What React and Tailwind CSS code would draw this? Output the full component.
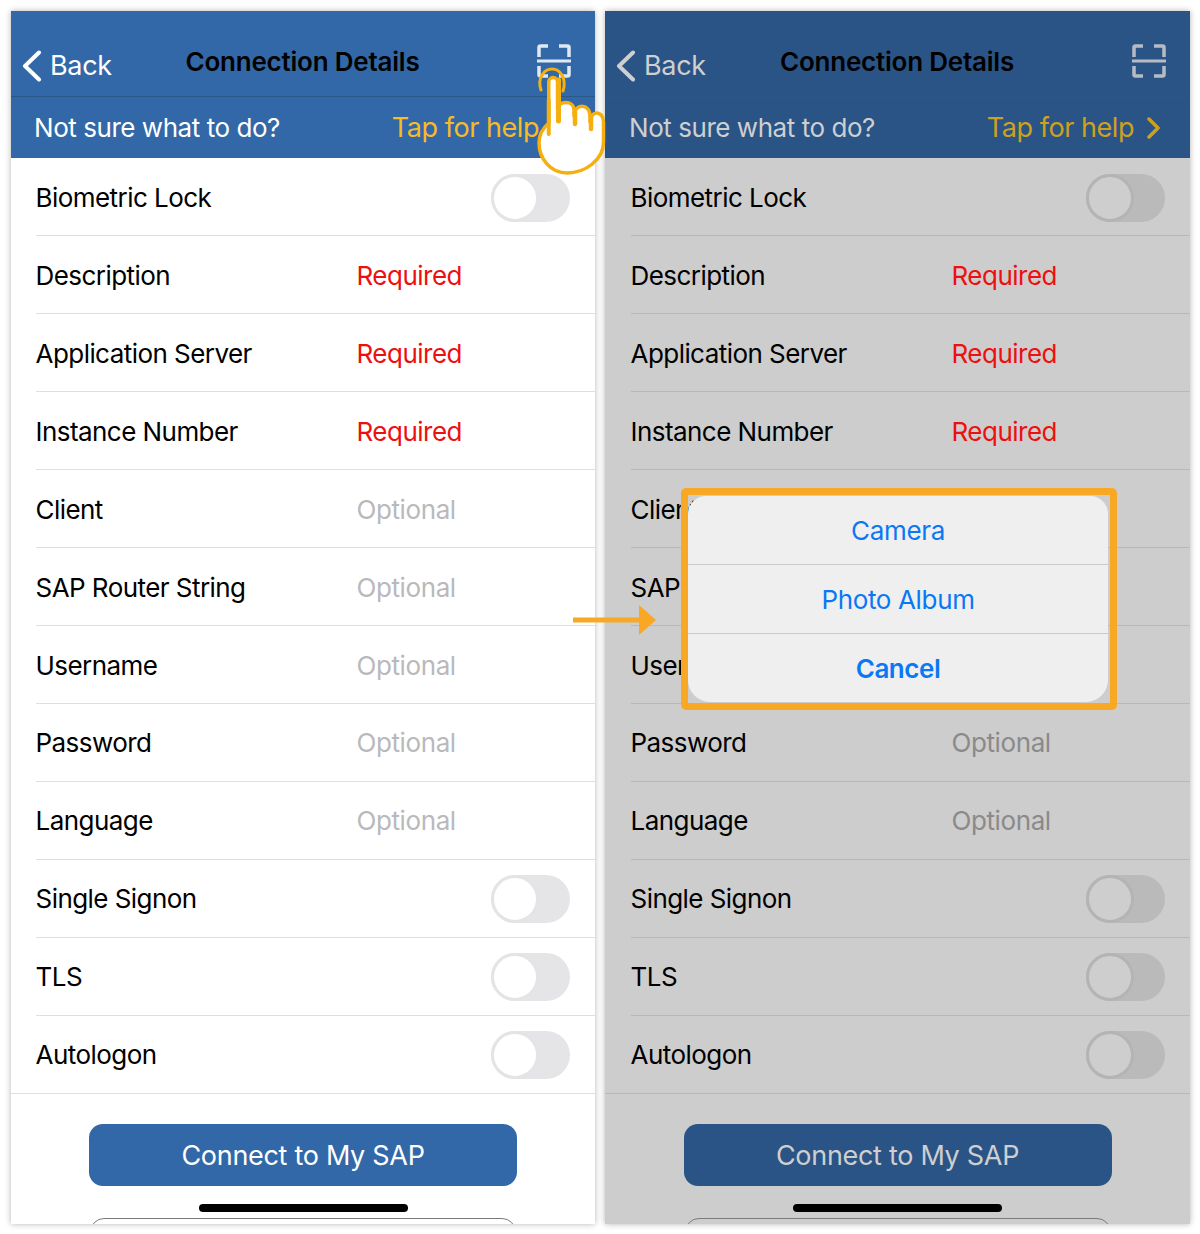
import React from "react";

const rows = [
  ["Biometric Lock", "toggle"],
  ["Description", "Required"],
  ["Application Server", "Required"],
  ["Instance Number", "Required"],
  ["Client", "Optional"],
  ["SAP Router String", "Optional"],
  ["Username", "Optional"],
  ["Password", "Optional"],
  ["Language", "Optional"],
  ["Single Signon", "toggle"],
  ["TLS", "toggle"],
  ["Autologon", "toggle"],
];

function ScanIcon({ color }) {
  return (
    <svg width="34" height="34" viewBox="0 0 34 34" fill="none" stroke={color} strokeWidth="3.5" opacity="0.85">
      <path d="M2 13V3.500A1.500 1.500 0 0 1 3.500 2H11" />
      <path d="M22 2h8.500A1.500 1.500 0 0 1 32 3.500V13" />
      <path d="M2 22v8.500A1.500 1.500 0 0 0 3.500 32H11" />
      <path d="M22 32h8.500a1.500 1.500 0 0 0 1.500-1.500V22" />
      <path d="M0 17h34" strokeWidth="3" />
    </svg>
  );
}

function Toggle({ dim }) {
  return (
    <div className={`flex items-center w-[79px] h-[48px] rounded-full mr-[25px] ${dim ? "bg-[#bababa]" : "bg-[#e5e5e8]"}`}>
      <div
        className={`w-[48px] h-[48px] rounded-full border-[3px] ${dim ? "bg-[#cecece] border-[#b4b4b4]" : "bg-white border-[#e4e4e6]"}`}
      />
    </div>
  );
}

function Row({ label, value, dim, low }) {
  const valueClass = value === "Required" ? "text-[#ee0f0f] tracking-[-0.5px]" : dim ? "text-[#8a8a8a] tracking-[-0.4px]" : "text-[#b9b9bc] tracking-[-0.4px]";
  return (
    <div className={`h-[78px] ${dim ? "pl-[26px]" : "pl-[25px]"}`}>
      <div className={`flex items-center justify-between h-full border-b ${low ? "" : "pt-[2px]"} ${dim ? "border-[#b8b8b8]" : "border-[#dfdfe1]"}`}>
        <span className="text-black w-[320.5px] ml-[-0.5px] mr-[0.5px] shrink-0 tracking-[-0.55px]">{label}</span>
        {value === "toggle" ? <Toggle dim={dim} /> : <span className={`flex-1 ${valueClass}`}>{value}</span>}
      </div>
    </div>
  );
}

function Screen({ dim }) {
  const bar = dim ? "bg-[#2a5486]" : "bg-[#3268a7]";
  const help = dim ? "text-[#cea020]" : "text-[#f7bb27]";
  const white = dim ? "text-[#cfcfcf]" : "text-white";
  const stroke = dim ? "#cfcfcf" : "#ffffff";
  return (
    <div
      className={`relative h-[1213px] overflow-hidden shadow-[0_0_6px_rgba(0,0,0,0.3)] text-[26px] leading-[32px] ${dim ? "w-[585px] bg-[#cdcdcd]" : "w-[584px] bg-white"}`}
    >
      <div className={`${bar} h-[86px] grid grid-cols-[1fr_auto_1fr] items-center pl-[11px] pr-[24px] border-b border-[#295788]`}>
        <div className={`flex items-center gap-[8px] mt-[25px] text-[27px] tracking-[-0.3px] ${white}`}>
          <svg width="20" height="32" viewBox="0 0 20 32" fill="none" stroke={stroke} strokeWidth="4" strokeLinecap="round" strokeLinejoin="round">
            <path d="M17 2.500 3 16l14 13.500" />
          </svg>
          <span>Back</span>
        </div>
        <span className="text-black font-semibold mt-[16px] tracking-[-0.22px] ml-[12px]">Connection Details</span>
        <div className="mt-[15px] justify-self-end">
          <ScanIcon color={stroke} />
        </div>
      </div>
      <div className={`${bar} h-[61px] flex items-center justify-between pr-[30px] ${dim ? "pl-[24px]" : "pl-[23px]"}`}>
        <span className={`tracking-[-0.45px] ${white}`}>Not sure what to do?</span>
        <div className={`flex items-center gap-[13px] text-[27px] tracking-[-0.45px] ${help}`}>
          <span>Tap for help</span>
          <svg width="13" height="22" viewBox="0 0 13 22" fill="none" stroke="currentColor" strokeWidth="3.5" strokeLinecap="round" strokeLinejoin="round">
            <path d="M2 2l9 9-9 9" />
          </svg>
        </div>
      </div>
      {rows.map(([label, value], i) => (
        <Row key={label} label={label} value={value} dim={dim} low={i >= 7} />
      ))}
      <div className={`border-t -mt-px ${dim ? "border-[#b8b8b8]" : "border-[#dfdfe1]"}`} />
      <div className="flex flex-col items-center pt-[30px]">
        <div className={`w-[428px] h-[62px] pt-[2px] rounded-[14px] flex items-center justify-center text-[27px] tracking-[-0.3px] ${bar} ${white}`}>
          Connect to My SAP
        </div>
        <div className="w-[209px] h-[8px] rounded-full bg-black mt-[18px]" />
        <div className="w-[426px] h-[20px] rounded-t-[14px] border border-[#7b7b7b] mt-[6px]" />
      </div>
      {dim && (
        <div className="absolute left-[76px] top-[477px] w-[436px] h-[222px] rounded-[5px] border-[7px] border-[#f9a825]">
          <div className="w-[420px] h-[206px] mt-px rounded-b-[22px] rounded-t-[18px] bg-[#efefef] flex flex-col text-[#0a78f5] overflow-hidden">
            <div className="h-[69px] pt-[2px] flex items-center justify-center border-b border-[#c9c9c9] tracking-[-0.35px]">Camera</div>
            <div className="h-[69px] pt-[2px] flex items-center justify-center border-b border-[#c9c9c9] tracking-[-0.35px]">Photo Album</div>
            <div className="h-[68px] pt-[2px] flex items-center justify-center font-semibold tracking-[-0.45px]">Cancel</div>
          </div>
        </div>
      )}
    </div>
  );
}

function Hand() {
  return (
    <svg className="absolute left-[530px] top-[40px]" width="80" height="140" viewBox="0 0 80 140" fill="none">
      <path d="M11 50C7 38 14 29 22 29C30 29 37 38 33 51" stroke="#f5b00f" strokeWidth="3" strokeLinecap="round" />
      <path
        d="M18.750 83V42a4.400 4.400 0 0 1 8.800 0V70C27.500 60 44 60 44 70V76C44 63 60 63 60 76V82C60 70 73.500 70 73.500 82V102C73.500 120 55 133 37 133C20 133 9 118 9 103C9 95 13 88 18.750 83Z"
        fill="#ffffff"
        stroke="#f5b00f"
        strokeWidth="3.5"
        strokeLinejoin="round"
      />
      <path d="M18.750 60V94" stroke="#f5b00f" strokeWidth="4" strokeLinecap="round" />
      <path d="M28.500 40V81" stroke="#f5b00f" strokeWidth="5" strokeLinecap="round" />
      <path d="M45 72V84M61 76V89" stroke="#f5b00f" strokeWidth="4.500" strokeLinecap="round" />
    </svg>
  );
}

function Arrow() {
  return (
    <svg className="absolute left-[572px] top-[605px]" width="84" height="30" viewBox="0 0 84 30">
      <path d="M1 12.500h67v5H1z" fill="#f9a825" />
      <path d="M67 0l17 15-17 15z" fill="#f9a825" />
    </svg>
  );
}

export default function App() {
  return (
    <div
      className="relative w-[1200px] h-[1234px] bg-white"
      style={{ fontFamily: "Inter, 'Liberation Sans', sans-serif" }}
    >
      <div className="flex gap-[10px] pl-[11px] pt-[11px]">
        <Screen />
        <Screen dim />
      </div>
      <Hand />
      <Arrow />
    </div>
  );
}
